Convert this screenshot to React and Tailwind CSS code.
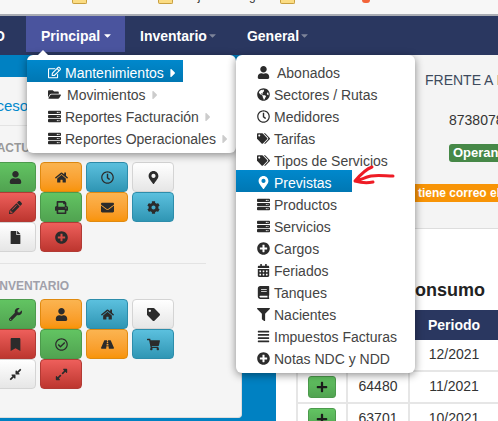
import {
  FaUser, FaHome, FaRegClock, FaMapMarkerAlt, FaPencilAlt, FaPrint, FaEnvelope, FaCog, FaFile, FaPlusCircle,
  FaWrench, FaRegCheckCircle, FaRoad, FaShoppingCart, FaTag, FaTags, FaBookmark, FaCompressAlt, FaExpandAlt,
  FaGlobeAmericas, FaAlignJustify, FaServer, FaCalendarAlt, FaBook, FaFilter, FaFolderOpen, FaRegEdit, FaPlus, FaCaretRight, FaCaretDown,
} from 'react-icons/fa';

const colors = {
  green: 'from-[#62c462] to-[#51a351] border-[#4c9a4c]',
  orange: 'from-[#fbb450] to-[#f89406] border-[#e08a10]',
  blue: 'from-[#5bc0de] to-[#2f96b4] border-[#2d8dab]',
  red: 'from-[#ee5f5b] to-[#bd362f] border-[#b23a34]',
  white: 'from-[#ffffff] to-[#e6e6e6] border-[#d4d4d4]',
};

const facturacion = [
  ['green', FaUser], ['orange', FaHome], ['blue', FaRegClock], ['white', FaMapMarkerAlt],
  ['red', FaPencilAlt], ['green', FaPrint], ['orange', FaEnvelope], ['blue', FaCog],
  ['white', FaFile], ['red', FaPlusCircle],
];

const inventario = [
  ['green', FaWrench], ['orange', FaUser], ['blue', FaHome], ['white', FaTag],
  ['red', FaBookmark], ['green', FaRegCheckCircle], ['orange', FaRoad], ['blue', FaShoppingCart],
  ['white', FaCompressAlt], ['red', FaExpandAlt],
];

const subItems = [
  ['Abonados', FaUser], ['Sectores / Rutas', FaGlobeAmericas], ['Medidores', FaRegClock], ['Tarifas', FaTags],
  ['Tipos de Servicios', FaTags], ['Previstas', FaMapMarkerAlt], ['Productos', FaServer], ['Servicios', FaServer],
  ['Cargos', FaPlusCircle], ['Feriados', FaCalendarAlt], ['Tanques', FaBook], ['Nacientes', FaFilter],
  ['Impuestos Facturas', FaAlignJustify], ['Notas NDC y NDD', FaPlusCircle],
];

const mainItems = [
  ['Mantenimientos', FaRegEdit], ['Movimientos', FaFolderOpen], ['Reportes Facturación', FaServer], ['Reportes Operacionales', FaServer],
];

function IconGrid({ items }) {
  return (
    <div className="-ml-[6px] grid grid-cols-[repeat(4,42px)] gap-x-[4px]">
      {items.map(([color, Icon], index) => (
        <div
          key={index}
          className={`flex h-[30px] items-center justify-center rounded-[4px] border bg-linear-to-b text-[13px] text-[#2b2b2b] ${colors[color]}`}
        >
          <Icon />
        </div>
      ))}
    </div>
  );
}

function MenuRow({ label, Icon, active, caret, shift = 0 }) {
  return (
    <div
      className={`flex h-[22px] w-fit items-center whitespace-nowrap pl-[21px] pr-[20px] pt-[3px] ${
        active ? 'bg-linear-to-b from-[#0088cc] to-[#0077b3] text-white' : 'text-[#444]'
      }`}
    >
      <span className={`flex w-[17px] shrink-0 text-[13px] ${active ? 'text-white' : 'text-[#2b2b2b]'}`}>
        <Icon />
      </span>
      <span className={shift === 3 ? 'ml-[3px]' : shift === 2 ? 'ml-[2px]' : ''}>{label}</span>
      {caret && (
        <FaCaretRight className={`-mr-[17px] ml-[2px] text-[14px] ${active ? 'text-white' : 'text-[#ccc]'}`} />
      )}
    </div>
  );
}

function TableRow({ value, period }) {
  return (
    <div className="grid h-[32px] grid-cols-[52px_62px_88px] border-b-2 border-[#e6e6e6] text-sm text-[#333]">
      <div className="flex items-center justify-center border-x-2 border-[#e6e6e6] pb-[1px]">
        <div className="flex h-[22px] w-[28px] items-center justify-center rounded-[3px] border border-[#4c9a4c] bg-linear-to-b from-[#62c462] to-[#51a351] text-[12px] text-[#1c1c1c]">
          <FaPlus />
        </div>
      </div>
      <div className="flex items-center justify-center border-r-2 border-[#e6e6e6] pb-[2px]">{value}</div>
      <div className="flex items-center justify-center pb-[2px]">{period}</div>
    </div>
  );
}

export default function App() {
  return (
    <div className="relative h-[421px] w-[498px] overflow-hidden bg-[#0081c2] font-['Liberation_Sans',Arial,sans-serif] text-sm">
      {/* bookmarks bar of the browser, cut off at the top */}
      <div className="flex h-[16px] items-start overflow-hidden border-b-2 border-[#a9acb3] bg-[#f7f7f7] text-xs text-[#333]">
        <span className="-mt-[12px] ml-[4px] w-[68px]">rde Grado</span>
        <span className="h-[4px] w-[15px] rounded-b-[2px] border border-t-0 border-[#c9a040] bg-[#fbdc83]" />
        <span className="-mt-[12px] ml-[8px] w-[63px]">Pacientes</span>
        <span className="h-[4px] w-[15px] rounded-b-[2px] border border-t-0 border-[#c9a040] bg-[#fbdc83]" />
        <span className="-mt-[12px] ml-[8px] w-[99px]">Mujeres código</span>
        <span className="h-[4px] w-[15px] rounded-b-[2px] border border-t-0 border-[#c9a040] bg-[#fbdc83]" />
        <span className="-mt-[12px] ml-[8px] w-[59px]">Correos</span>
        <span className="h-[3px] w-[8px] rounded-b-full bg-[#f2643a]" />
        <span className="-mt-[12px] ml-[12px] whitespace-nowrap">Actividades Nacional</span>
      </div>

      {/* navbar */}
      <div className="flex h-[39px] items-start bg-[#2a3760] font-bold text-white">
        <div className="-ml-[6px] flex h-[36px] w-[32px] items-center pt-[3px]">O</div>
        <div className="flex h-[36px] w-[99px] items-center bg-[#4a549e] pl-[15px] pt-[3px]">
          Principal
          <FaCaretDown className="ml-[2px] text-[11px]" />
        </div>
        <div className="flex h-[36px] items-center pl-[15px] pr-[15px] pt-[3px]">
          Inventario
          <FaCaretDown className="text-[11px] text-[#7d8499]" />
        </div>
        <div className="-ml-[2px] flex h-[36px] items-center pl-[16px] pt-[3px]">
          General
          <FaCaretDown className="text-[11px] text-[#7d8499]" />
        </div>
      </div>

      <div className="flex">
        {/* left panel */}
        <div className="mt-[22px] h-[341px] w-[242px] overflow-hidden rounded-br-[4px] border-r border-b border-[#ddd] bg-[#f5f5f5]">
          <div className="-ml-[21px] mt-[21px] text-[15px] leading-[16px] text-[#0088cc]">Accesos</div>
          <div className="mt-[11px] h-px w-[240px] bg-[#e3e3e3]" />
          <div className="-ml-[10px] mt-[15px] text-xs font-bold leading-[14px] text-[#999]">FACTURACION</div>
          <div className="mt-[7px]">
            <IconGrid items={facturacion} />
          </div>
          <div className="mt-[11px] h-px w-[206px] bg-[#e3e3e3]" />
          <div className="-ml-[4px] mt-[15px] text-xs font-bold leading-[14px] text-[#a0a0aa]">INVENTARIO</div>
          <div className="mt-[6px]">
            <IconGrid items={inventario} />
          </div>
        </div>

        {/* right panel */}
        <div className="ml-[34px] h-[366px] flex-1 overflow-hidden bg-white">
          <div className="h-[174px] border-b border-[#dddddd] bg-[#f4f4f4] text-[#333]">
            <div className="pl-[149px] pt-[17px] leading-[16px] whitespace-nowrap text-[#3d4a5c]">FRENTE A I</div>
            <div className="pl-[173px] pt-[24px] leading-[16px]">8738078</div>
            <div className="ml-[173px] mt-[16px] flex h-[18px] w-[90px] items-center rounded-[3px] bg-[#468847] pl-[4px] text-[13px] font-bold text-white">
              Operando
            </div>
            <div className="mt-[22px] flex h-[18px] items-center whitespace-nowrap bg-[#f89406] pl-[142px] text-xs font-bold text-white">
              tiene correo el
            </div>
          </div>
          <div className="pl-[126px] pt-[51px] text-lg leading-[20px] font-bold text-[#222]">Consumo</div>
          <div className="ml-[20px] mt-[10px]">
            <div className="grid h-[30px] grid-cols-[52px_62px_88px] bg-[#2a3760] font-bold text-white">
              <div />
              <div />
              <div className="flex items-center justify-center">Periodo</div>
            </div>
            <TableRow period="12/2021" />
            <TableRow value="64480" period="11/2021" />
            <TableRow value="63701" period="10/2021" />
          </div>
        </div>
      </div>

      {/* first dropdown */}
      <div className="absolute left-[27px] top-[55px] h-[98px] w-[209px] rounded-[6px] bg-white py-[5px] shadow-[0_2px_8px_rgba(0,0,0,0.45)]">
        <div className="absolute -top-[5px] left-[10px] h-0 w-0 border-x-[6px] border-b-[6px] border-x-transparent border-b-white" />
        {mainItems.map(([label, Icon], index) => (
          <MenuRow key={label} label={label} Icon={Icon} active={index === 0} caret shift={index === 1 ? 2 : 0} />
        ))}
      </div>

      {/* second dropdown */}
      <div className="absolute left-[236px] top-[55px] h-[318px] w-[179px] rounded-[6px] bg-white py-[5px] shadow-[0_2px_8px_rgba(0,0,0,0.45)]">
        {subItems.map(([label, Icon], index) => (
          <MenuRow key={label} label={label} Icon={Icon} active={index === 5} shift={index === 0 ? 3 : 0} />
        ))}
      </div>

      {/* hand drawn arrow */}
      <svg className="absolute left-[350px] top-[160px]" width="50" height="30" viewBox="0 0 50 30" fill="none">
        <path
          d="M22 7 C16 9 11 14 5 21 C12 23 18 23 23 22 M7 21 C12 19 16 17 21 16 C28 15 36 16 43 16"
          stroke="#ee1c25"
          strokeWidth="3"
          strokeLinecap="round"
          strokeLinejoin="round"
        />
      </svg>
    </div>
  );
}
